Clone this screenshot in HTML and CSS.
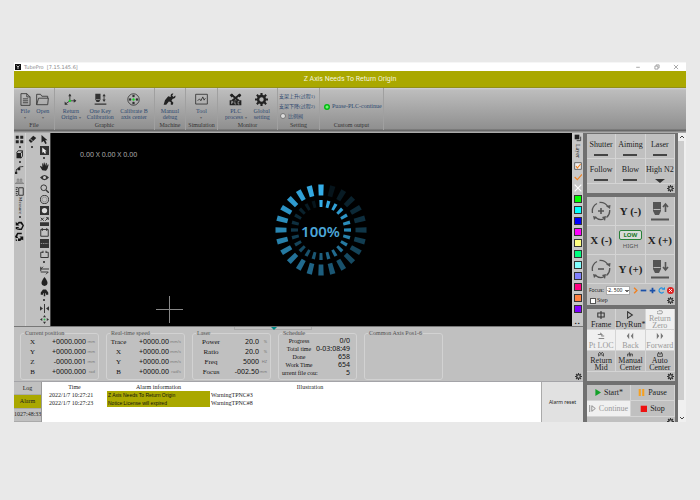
FILE: index.html
```html
<!DOCTYPE html>
<html lang="en">
<head>
<meta charset="utf-8">
<title>TubePro</title>
<link rel="stylesheet" href="styles.css">
</head>
<body>
<svg class="defs" aria-hidden="true">
  <symbol id="gear" viewBox="0 0 16 16"><circle cx="8" cy="8" r="4.2" fill="none" stroke="currentColor" stroke-width="3"/><path d="M8 0v3M8 13v3M0 8h3M13 8h3M2.3 2.3l2.2 2.2M11.5 11.5l2.2 2.2M2.3 13.7l2.2-2.2M11.5 4.5l2.2-2.2" stroke="currentColor" stroke-width="2.6"/></symbol>
  <symbol id="laserhead" viewBox="0 0 20 20"><path d="M3 1h8v9l-2 4H5l-2-4z" fill="currentColor"/><path d="M3.500 8.500h7" stroke="#bbb"/><path d="M1 18.500h18" stroke="currentColor" stroke-width="2"/></symbol>
  <symbol id="rotate" viewBox="0 0 20 20"><path d="M1.500 12A9 9 0 0 1 6 2.500M8.500 1.500A9 9 0 0 1 17 6M18.700 9A9 9 0 0 1 15.500 16.500M12.500 18.200A9 9 0 0 1 4 16" fill="none" stroke="currentColor" stroke-width="1.300"/><path d="M15 5l4 3 .5-4zM15 15l-4 1 3 4zM2 15l1 4 3-3z" fill="currentColor"/></symbol>
</svg>
<div class="app">
  <header class="titlebar">
    <svg class="logo" viewBox="0 0 12 12"><rect width="12" height="12" fill="#111"/><path d="M3 3l3 3 3-3M6 6v4" stroke="#fff" stroke-width="1.500" fill="none"/></svg>
    <span class="title">TubePro&nbsp; [7.15.145.6]</span>
    <div class="wincontrols">
      <button aria-label="Minimize"><svg viewBox="0 0 10 10"><path d="M2 5.500h6"/></svg></button>
      <button aria-label="Restore"><svg viewBox="0 0 10 10"><path d="M1.500 3.500h5v5h-5zM3.500 3V1.500h5v5H7"/></svg></button>
      <button aria-label="Close"><svg viewBox="0 0 10 10"><path d="M1.500 1.500l7 7M8.500 1.500l-7 7"/></svg></button>
    </div>
  </header>
  <div class="banner">Z Axis Needs To Return Origin</div>

  <nav class="ribbon">
    <section class="group g-file">
      <div class="items">
        <button><svg viewBox="0 0 20 20"><path d="M3 1h9l5 5v13H3z" class="ln"/><path d="M12 1v5h5M6 9h8M6 12h8M6 15h8" class="ln"/></svg><span>File<br><i>▾</i></span></button>
        <button><svg viewBox="0 0 20 20"><path d="M1 18V2h6l2 3h9v3M1 18h17l1-10H4L1 18" class="ln"/></svg><span>Open<br><i>▾</i></span></button>
      </div><h2>File</h2>
    </section>
    <section class="group g-graphic">
      <div class="items">
        <button><svg viewBox="0 0 20 20"><path d="M9 2v10M9 12l-7 5M9 12h9" class="ln"/><path d="M6.500 5L9 1l2.500 4zM15 9l4 3-4 3zM1 13v5h5z" fill="#333"/><circle cx="9" cy="12" r="1.800" fill="#1d2"/></svg><span>Return<br>Origin <i>▾</i></span></button>
        <button><svg viewBox="0 0 20 20"><path d="M2 1h8v9l-2 4H4l-2-4zM1 16h18v2H1zM15.500 1l2.500 4h-5zM15.500 14l2.500-4h-5z" fill="#333"/><path d="M15.500 4v7" class="ln"/><path d="M3 10h6" stroke="#aaa"/></svg><span>One Key<br>Calibration</span></button>
        <button><svg viewBox="0 0 20 20"><circle cx="10" cy="10" r="8.800" class="ln"/><circle cx="10" cy="4.700" r="1.900" fill="#333"/><circle cx="10" cy="15.300" r="1.900" fill="#333"/><circle cx="4.700" cy="10" r="1.900" fill="#333"/><circle cx="15.300" cy="10" r="1.900" fill="#333"/><circle cx="10" cy="10" r="1.800" fill="#1d2"/></svg><span>Calibrate B<br>axis center</span></button>
      </div><h2>Graphic</h2>
    </section>
    <section class="group g-machine">
      <div class="items">
        <button><svg viewBox="0 0 20 20"><path d="M1 18l2-7 5-6 4 1c-1-3 1-6 4-5l-2 3 2 2 3-2c1 3-1 5-4 5l-2 3 3 3-1 3h-3v-4l-3-1-4 5z" fill="#222"/></svg><span>Manual<br>debug</span></button>
      </div><h2>Machine</h2>
    </section>
    <section class="group g-sim">
      <div class="items">
        <button><svg viewBox="0 0 20 20"><path d="M1 2h18v15H1z" class="ln"/><path d="M4 12l3-3 2 3 3-6 2 5 2-3" class="ln"/></svg><span>Tool<br><i>▾</i></span></button>
      </div><h2>Simulation</h2>
    </section>
    <section class="group g-monitor">
      <div class="items">
        <button><svg viewBox="0 0 20 20"><path d="M3 2l12 10M17 2L5 12" stroke="#222" stroke-width="3"/><path d="M1 3l4-2 2 3-3 3zM14 4l3-3 2 3-3 3zM1 11h18v8H1z" fill="#222"/><path d="M4 17v-4h2v2H4M9 13v4h2M16 13h-2v4h2" stroke="#bbb" fill="none"/></svg><span>PLC<br>process <i>▾</i></span></button>
        <button><svg class="dark"><use href="#gear"/></svg><span>Global<br>setting</span></button>
      </div><h2>Monitor</h2>
    </section>
    <section class="group g-setting">
      <div class="links">
        <button>支架上升(过程1)</button><button>支架下降(过程2)</button><button><b class="lamp off"></b>比例阀</button>
      </div><h2>Setting</h2>
    </section>
    <section class="group g-custom">
      <div class="links single"><button><b class="lamp"></b>Puase-PLC-continue</button></div><h2>Custom output</h2>
    </section>
  </nav>

  <div class="body">
    <main class="left">
      <div class="work">
        <div class="tools edge">
          <button class="menu" aria-label="Array"><svg viewBox="0 0 12 12"><path d="M1 1h4v4H1zM7 1h4v4H7zM1 7h4v4H1zM7 7h4v4H7z" fill="#222"/></svg></button>
          <button class="menu" aria-label="Solid"><svg viewBox="0 0 12 12"><path d="M2 4h6v7H2z" fill="#222"/><path d="M2 4l2-3h6v7l-2 3M8 4l2-3" class="ln"/></svg></button>
          <button aria-label="Curve"><svg viewBox="0 0 12 12"><path d="M1 11C2 6 5 2 11 2M1 7l6-5" class="ln"/><path d="M0 9h3v3H0zM4 4h3v3H4z" fill="#222"/></svg></button>
          <button aria-label="Tray"><svg viewBox="0 0 12 12"><path d="M1 9h10M3 8V4h2v4M7 8V4h2v4M0 10h12" stroke="#777" fill="none"/></svg></button>
          <button aria-label="Ruler"><svg viewBox="0 0 12 12"><path d="M5 1h6v10H5z" class="ln"/><path d="M1 1h3M1 3.500h2M1 6h3M1 8.500h2M1 11h3" class="ln"/></svg></button>
          <button class="vtext">Measure</button>
          <button class="menu stub" aria-label="More measures"></button>
          <button aria-label="Undo"><svg viewBox="0 0 12 12"><path d="M1 1v5h5L4 4l3-1 3 3-2 4H3v2h6l3-6-3-5H5L3 3zM1 8h4v3H1z" fill="#111"/></svg></button>
          <button aria-label="Redo"><svg viewBox="0 0 12 12"><path d="M11 11V6H6l2 2-3 1-2-3 1-3h5V1H3L0 6l3 6h4l2-2zM1 8h3v4H1z" fill="#111"/></svg></button>
        </div>
        <div class="tools">
          <button class="menu" aria-label="Eraser"><svg viewBox="0 0 12 12"><path d="M1 7l6-6 4 3-6 6H3z" fill="#222"/><path d="M3 5l4 4" stroke="#ddd"/></svg></button>
        </div>
        <div class="tools main">
          <button aria-label="Select"><svg viewBox="0 0 12 12"><path d="M2 0l8 7H7l2 4-2 1-2-4-3 2z" fill="#222"/></svg></button>
          <button class="menu" aria-label="Select part"><svg viewBox="0 0 12 12"><path d="M0 0h12v12H0z" fill="#333"/><path d="M3 2l6 5H7l1 3H6L5 8 3 9z" fill="#eee"/></svg></button>
          <button aria-label="Pan"><svg viewBox="0 0 12 12"><path d="M3 11L0 6l1-1 2 2V2l1-.5L5 5V1l1-.5L7 5l1-4 1 .5V6l1.500-3 1 .5L10 9l-2 2.500z" fill="#222"/></svg></button>
          <button aria-label="View"><svg viewBox="0 0 12 12"><path d="M0 6q6-7 12 0q-6 7-12 0z" fill="#333"/><circle cx="6" cy="6" r="2" fill="#ccc"/></svg></button>
          <button aria-label="Zoom"><svg viewBox="0 0 12 12"><circle cx="5" cy="5" r="3.800" class="ln"/><path d="M8 8l4 4" stroke="#333" stroke-width="1.800"/></svg></button>
          <button aria-label="Circle"><svg viewBox="0 0 12 12"><circle cx="6" cy="6" r="5.400" class="ln"/><circle cx="6" cy="6" r="3.200" fill="none" stroke="#777" stroke-width=".7"/></svg></button>
          <button aria-label="Hole"><svg viewBox="0 0 12 12"><path d="M0 0h12v12H0z" fill="#333"/><circle cx="6" cy="6" r="3.500" fill="#ddd"/></svg></button>
          <button aria-label="Cut"><svg viewBox="0 0 12 12"><path d="M0 7h12v5H0z" fill="#333"/><path d="M1 1l4 4M5 1L1 5M7 5l4-4M8 1h3v3" class="ln"/></svg></button>
          <button aria-label="Frame"><svg viewBox="0 0 12 12"><path d="M1 2h10v9H1z" class="ln"/><path d="M3 0v4M9 0v4" class="ln"/></svg></button>
          <button aria-label="Lines"><svg viewBox="0 0 12 12"><path d="M0 0h12v12H0z" fill="#333"/><path d="M1 6h10" stroke="#aaa" stroke-dasharray="2 1"/></svg></button>
          <button class="menu" aria-label="Weld"><svg viewBox="0 0 12 12"><path d="M4 3H1v7h10V3H8M4 1v3M8 1v3" class="ln"/></svg></button>
          <button aria-label="Reverse"><svg viewBox="0 0 12 12"><path d="M12 4H1l3-3M1 8h10l-3 3M1 1v6" class="ln"/></svg></button>
          <button aria-label="Cool point"><svg viewBox="0 0 12 12"><path d="M6 0q8 10 0 12Q-2 10 6 0z" fill="#222"/></svg></button>
          <button class="menu" aria-label="Group"><svg viewBox="0 0 12 12"><path d="M1 9V6l3-4h4l3 4v3H8V7H7v4H5V7H4v2z" fill="#222"/></svg></button>
          <button aria-label="Mirror"><svg viewBox="0 0 12 12"><path d="M0 3l4 3-4 3zM12 3L8 6l4 3z" fill="#333"/><path d="M6 0v12" class="ln"/></svg></button>
          <button aria-label="Center"><svg viewBox="0 0 12 12"><path d="M6 0l2 3H4zM6 12l2-3H4zM0 6l3-2v4zM12 6L9 4v4z" fill="#333"/><circle cx="6" cy="6" r="1.300" fill="#3b5"/></svg></button>
        </div>
        <div class="canvas">
          <span class="dims">0.00 X 0.00 X 0.00</span>
          <svg class="ring" id="ring" viewBox="-48 -48 96 96"></svg>
          <span class="percent">100%</span>
          <svg class="cross" viewBox="0 0 27 27"><path d="M0 13.500h27M13.500 0v27" stroke="#888"/></svg>
        </div>
        <div class="layers">
          <button aria-label="Layers"><svg viewBox="0 0 12 12"><path d="M1 1h7v7H1z" fill="#222"/><path d="M10 4v6H4" class="ln"/></svg></button>
          <span class="vtext">Layer</span>
          <button aria-label="Show all"><svg viewBox="0 0 12 12"><path d="M1 1h10v10H1z" fill="#eee" stroke="#333"/><path d="M3 6l2 3 5-6" stroke="#f08020" stroke-width="1.600" fill="none"/></svg></button>
          <button aria-label="Process"><svg viewBox="0 0 12 12"><path d="M1 6l4 4 7-8" stroke="#f08020" stroke-width="1.600" fill="none"/></svg></button>
          <button aria-label="No process"><svg viewBox="0 0 12 12"><path d="M1 1l10 10M11 1L1 11" stroke="#fff" stroke-width="1.800"/></svg></button>
          <button class="swatch c1" aria-label="Green"></button><button class="swatch c2" aria-label="Cyan"></button><button class="swatch c3" aria-label="Blue"></button><button class="swatch c4" aria-label="Magenta"></button><button class="swatch c5" aria-label="Yellow"></button><button class="swatch c6" aria-label="Mint"></button><button class="swatch c7" aria-label="Aqua"></button><button class="swatch c8" aria-label="Periwinkle"></button><button class="swatch c9" aria-label="Rose"></button><button class="swatch c10" aria-label="Orange"></button><button class="swatch c11" aria-label="Violet"></button>
          <span class="grip">▪ ▪</span>
        </div>
      </div>

      <div class="status">
        <div class="splitter"></div>
        <div class="boxes">
        <fieldset><legend>Current position</legend><dl>
          <dt>X</dt><dd>+0000.000</dd><dd class="u">mm</dd><dt>Y</dt><dd>+0000.000</dd><dd class="u">mm</dd><dt>Z</dt><dd>-0000.001</dd><dd class="u">mm</dd><dt>B</dt><dd>+0000.000</dd><dd class="u">rad</dd></dl></fieldset>
        <fieldset><legend>Real-time speed</legend><dl class="rates">
          <dt>Trace</dt><dd>+0000.00</dd><dd class="u">mm/s</dd><dt>X</dt><dd>+0000.00</dd><dd class="u">mm/s</dd><dt>Y</dt><dd>+0000.00</dd><dd class="u">mm/s</dd><dt>B</dt><dd>+0000.00</dd><dd class="u">rad/s</dd></dl></fieldset>
        <fieldset><legend>Laser</legend><dl class="wide">
          <dt>Power</dt><dd>20.0</dd><dd class="u">%</dd><dt>Ratio</dt><dd>20.0</dd><dd class="u">%</dd><dt>Freq</dt><dd>5000</dd><dd class="u">HZ</dd><dt>Focus</dt><dd>-002.50</dd><dd class="u">mm</dd></dl></fieldset>
        <fieldset><legend>Schedule</legend><dl class="sched">
          <dt>Progress</dt><dd>0/0</dd><dt>Total time</dt><dd>0-03:08:49</dd><dt>Done</dt><dd>658</dd><dt>Work Time</dt><dd>654</dd><dt>urrent file cou:</dt><dd>5</dd></dl></fieldset>
        <fieldset><legend>Common Axis Pos1-6</legend></fieldset>
        <button class="gearbtn" aria-label="Status settings"><svg><use href="#gear"/></svg></button>
        </div>
      </div>

      <div class="log">
        <div class="tabs"><button>Log</button><button class="on">Alarm</button><button>1027:48:33</button></div>
        <div class="tablewrap"><table>
          <thead><tr><th class="time">Time</th><th class="info">Alarm information</th><th class="ill">Illustration</th><th></th></tr></thead>
          <tbody><tr><td class="when">2022/1/7 10:27:21</td><td class="warn">Z Axis Needs To Return Origin</td><td class="code">WarningTPNC#3</td><td></td></tr>
          <tr><td class="when">2022/1/7 10:27:23</td><td class="warn">Notice:License will expired</td><td class="code">WarningTPNC#8</td><td></td></tr></tbody>
        </table></div>
        <button class="reset">Alarm reset</button>
      </div>
    </main>

    <aside class="side">
      <div class="panels">
        <div class="panel toggles">
          <button>Shutter<i class="bar"></i></button><button>Aiming<i class="bar"></i></button><button>Laser<i class="bar"></i></button>
          <button>Follow<i class="bar"></i></button><button>Blow<i class="bar"></i></button><button>High N2<i class="tri"></i></button>
          <div class="foot"><svg><use href="#gear"/></svg></div>
        </div>
        <div class="panel jog">
          <button aria-label="Rotate plus"><svg viewBox="0 0 20 20"><use href="#rotate"/><path d="M7 10h6M10 7v6" stroke="#555" stroke-width="1.600"/></svg></button><button>Y (-)</button><button aria-label="Head up"><svg viewBox="0 0 20 20"><use href="#laserhead"/><path d="M15.500 11V3M13 6l2.500-3L18 6" class="arrow"/></svg></button>
          <button>X (-)</button><button class="speed"><b>LOW</b><span>HIGH</span></button><button>X (+)</button>
          <button aria-label="Rotate minus"><svg viewBox="0 0 20 20"><use href="#rotate"/><path d="M7 10h6" stroke="#555" stroke-width="1.600"/></svg></button><button>Y (+)</button><button aria-label="Head down"><svg viewBox="0 0 20 20"><use href="#laserhead"/><path d="M15.500 3v8M13 8l2.500 3L18 8" class="arrow"/></svg></button>
          <div class="focus"><label for="focus">Focus:</label><select id="focus"><option>-2. 500</option></select>
            <button aria-label="Go"><svg viewBox="0 0 10 10"><path d="M3 1l4 4-4 4" stroke="#f08020" stroke-width="2" fill="none"/></svg></button>
            <button aria-label="Decrease"><svg viewBox="0 0 10 10"><path d="M1 5h8" stroke="#1a50a8" stroke-width="2.500"/></svg></button>
            <button aria-label="Increase"><svg viewBox="0 0 10 10"><path d="M1 5h8M5 1v8" stroke="#1a50a8" stroke-width="2.500"/></svg></button>
            <button aria-label="Refresh"><svg viewBox="0 0 10 10"><path d="M8 7a3.500 3.500 0 1 1-1-5" stroke="#2090e0" stroke-width="1.600" fill="none"/><path d="M5 4h5V0z" fill="#2090e0"/></svg></button>
            <button aria-label="Stop"><svg viewBox="0 0 10 10"><circle cx="5" cy="5" r="5" fill="#d22"/><path d="M3 3l4 4M7 3L3 7" stroke="#fff" stroke-width="1.400"/></svg></button>
          </div>
          <div class="foot"><input type="checkbox" id="step"><label for="step">Step</label><svg><use href="#gear"/></svg></div>
        </div>
        <div class="panel moves">
          <button><svg viewBox="0 0 10 10"><path d="M1 2.500h8v5H1zM5 0v10" class="ln"/></svg>Frame</button><button><svg viewBox="0 0 10 10"><path d="M2 1l6 4-6 4z" class="ln"/></svg>DryRun*</button><button class="off two" disabled><svg viewBox="0 0 10 10"><path d="M2 8a2 2 0 0 1 0-4q1-2 3-1q4-1 4 2t-2 3z" class="ln"/></svg>Return Zero</button>
          <button class="off" disabled><svg viewBox="0 0 10 10"><path d="M1 3h5L4 1M9 8H2M6 3v2h3" class="ln"/></svg>Pt LOC</button><button class="off" disabled><svg viewBox="0 0 10 10"><path d="M4 1L1 5l3 4zM9 1L6 5l3 4z" fill="#777"/></svg>Back</button><button class="off" disabled><svg viewBox="0 0 10 10"><path d="M1 1l3 4-3 4zM6 1l3 4-3 4z" fill="#777"/></svg>Forward</button>
          <button class="two"><svg viewBox="0 0 10 10"><path d="M1 9V4l2-2 2 4 2-4 2 2v5M1 7h3M6 7h3" class="ln"/></svg>Return Mid</button><button class="two"><svg viewBox="0 0 10 10"><path d="M1 9V5h8v4M4 9V2M6 9V5" class="ln"/></svg>Manual Center</button><button class="two"><svg viewBox="0 0 10 10"><path d="M1 9V5l2-3v3h4V2l2 3v4z" class="ln"/></svg>Auto Center</button>
          <div class="foot"><svg><use href="#gear"/></svg></div>
        </div>
        <div class="panel run">
          <button><svg viewBox="0 0 10 10"><path d="M2 0l8 5-8 5z" fill="#12a028"/></svg>Start*</button><button><svg viewBox="0 0 10 10"><path d="M1 0h3v10H1zM6 0h3v10H6z" fill="#f6a020"/></svg>Pause</button>
          <button class="off" disabled><svg viewBox="0 0 10 10"><path d="M1 0v10M4 1l5 4-5 4z" class="ln"/></svg>Continue</button><button><svg viewBox="0 0 10 10"><path d="M1 1h9v9H1z" fill="#e11"/></svg>Stop</button>
          <div class="foot"><svg><use href="#gear"/></svg></div>
        </div>
      </div>
      <div class="scroll"><svg viewBox="0 0 8 8"><path d="M2 5l2-2 2 2"/></svg><i></i><svg viewBox="0 0 8 8"><path d="M2 3l2 2 2-2"/></svg></div>
    </aside>
  </div>
</div>
<script src="ring.js"></script>
</body>
</html>
```
FILE: styles.css
```css
* { box-sizing: border-box; }
body { margin: 0; background: #e9e9e9; font: 6px/7px "Liberation Serif", "Noto Sans CJK SC", serif; color: #222; }
button { font: inherit; color: inherit; background: none; border: 0; padding: 0; margin: 0; }
i { font-style: normal; }
svg { display: block; }
.defs { width: 0; height: 0; position: absolute; }
.ln { fill: none; stroke: #333; stroke-width: 1.3; }
.app { margin: 62px 14px 0; }

.titlebar { height: 9px; background: #fff; display: flex; align-items: center; padding: 0 7px 0 1px; gap: 3px; font: 5px/8px "DejaVu Sans", sans-serif; color: #888; border-top: 1px solid #f6f6f6; }
.logo { width: 6px; height: 6px; }
.wincontrols { margin-left: auto; display: flex; gap: 13px; }
.wincontrols svg { width: 6px; height: 6px; fill: none; stroke: #888; stroke-width: 1.2; }
.banner { height: 17px; background: #aaa800; border-bottom: 1px solid #928f18; color: #f4f4dc; font: 7px/17px Roboto, sans-serif; text-align: center; }

.ribbon { height: 45px; display: flex; background: linear-gradient(#d0d0d8 0, #bdbdbd 2px, #8f8f8f 41px, #666 42px, #6a6a6a 43px, #aaa 44px); }
.group { height: 42px; border-right: 1px solid #a0a0a0; display: flex; flex-direction: column; }
.g-file { width: 41px; } .g-graphic { width: 100px; } .g-machine { width: 31px; } .g-sim { width: 32px; } .g-monitor { width: 60px; } .g-setting { width: 42px; } .g-custom { width: 64px; }
.group h2 { margin: 0; font: 6px/8px "Liberation Serif", serif; text-align: center; color: #333; }
.items { display: flex; justify-content: space-evenly; height: 33px; padding-top: 5px; color: #2f4a70; }
.items button { display: flex; flex-direction: column; align-items: center; gap: 2px; line-height: 6px; }
.items svg { width: 13px; height: 13px; flex: none; }
.items svg.dark { color: #222; }
.items i { font-size: 4px; color: #666; }
.links { height: 33px; padding: 3px 0 0 1px; display: flex; flex-direction: column; color: #2f4a70; font-size: 5px; }
.links button { height: 10px; display: flex; align-items: center; white-space: nowrap; }
.links.single { justify-content: center; padding: 4px 0 0 4px; font-size: 6px; }
.lamp { width: 6px; height: 6px; border-radius: 50%; background: radial-gradient(#8f8 10%, #0b1 50%); margin-right: 2px; }
.lamp.off { background: #ddd; border: 1px solid #777; margin-left: 1px; }

.body { display: flex; height: 289px; }
.left { flex: 1; min-width: 0; display: flex; flex-direction: column; background: #c0c0c0; }
.work { height: 194px; display: flex; border-bottom: 1px solid #777; }
.tools { width: 12px; padding-top: 1px; display: flex; flex-direction: column; align-items: center; }
.tools.edge { border-right: 1px solid #d2d2d2; }
.tools button { width: 11px; height: 11px; display: flex; flex-direction: column; align-items: center; flex: none; }
.tools svg { width: 9px; height: 9px; flex: none; margin-top: 1px; }
.tools .menu { height: 16px; }
.tools .menu::after { content: ""; width: 2px; height: 2px; background: #222; border-radius: 50%; margin-top: 2px; }
.tools.edge .menu { height: 15px; }
.tools .menu.stub { height: 6px; }
.tools .vtext, .layers .vtext { writing-mode: vertical-rl; height: auto; width: 8px; line-height: 8px; display: block; }
.tools .vtext { font-size: 5px; }
.canvas { flex: 1; background: #000; position: relative; border-left: 1px solid #444; }
.dims { position: absolute; left: 29px; top: 17px; font: 7px/10px "Noto Sans", sans-serif; color: #aaa; }
.ring { position: absolute; left: calc(50% + 9px); top: 50%; width: 96px; height: 96px; transform: translate(-50%, -50%); }
.percent { position: absolute; left: calc(50% + 9px); top: calc(50% + 1px); transform: translate(-50%, -50%); font: 600 15px/20px "Noto Sans", sans-serif; color: #4ba6d8; }
.cross { position: absolute; left: 105px; bottom: 3px; width: 27px; height: 27px; }
.layers { width: 11px; display: flex; flex-direction: column; align-items: center; background: #c8c8c8; }
.layers button { width: 8px; height: 8px; margin: 1px 0 2px; flex: none; }
.layers .vtext { height: 17px; }
.layers svg { width: 8px; height: 8px; }
.layers .swatch { border: 1px solid #333; }
.c1 { background: #0f0; } .c2 { background: #0ff; } .c3 { background: #00f; } .c4 { background: #f0f; } .c5 { background: #ffff80; } .c6 { background: #00ff80; } .c7 { background: #80ffff; } .c8 { background: #8080ff; } .c9 { background: #ff0080; } .c10 { background: #ff8040; } .c11 { background: #8000ff; }
.grip { font-size: 5px; line-height: 5px; margin-top: auto; }

.status { height: 55px; border-bottom: 1px solid #a4a4a8; }
.splitter { width: 78px; height: 3px; margin-left: 220px; border: 1px solid #aaa; border-top: 0; position: relative; }
.splitter::after { content: ""; position: absolute; left: 36px; top: 0; border: 3px solid transparent; border-top: 3px solid #088; border-bottom: 0; }
.boxes { display: flex; gap: 7px; padding-left: 6px; height: 50px; }
fieldset { flex: 0 1 79px; min-width: 0; margin: 0; padding: 0 3px; border: 1px solid #d2d2d2; border-radius: 3px; overflow: hidden; }
legend { padding: 0 1px; color: #555; line-height: 7px; white-space: nowrap; }
dl { margin: 0; display: grid; grid-template-columns: 17px 1fr 9px; line-height: 10px; font-size: 7px; align-items: center; }
dl.rates { grid-template-columns: 17px 1fr 12px; }
dl.wide { grid-template-columns: 30px 1fr 8px; }
dt { text-align: center; white-space: nowrap; color: #111; }
dd { margin: 0; text-align: right; font: 7px/10px "Noto Sans", sans-serif; color: #111; white-space: nowrap; }
dd.u { font-size: 4px; color: #777; }
dl.sched { grid-template-columns: 34px 1fr; padding-right: 7px; line-height: 8px; font-size: 6px; }
.sched dd { line-height: 8px; }
.gearbtn { margin: auto 1px 0 auto; color: #333; }
.gearbtn svg, .foot svg { width: 7px; height: 7px; color: #333; }

.log { flex: 1; display: flex; min-height: 0; }
.tabs { width: 28px; display: flex; flex-direction: column; overflow: hidden; border-right: 1px solid #999; }
.tabs button { flex: 1; border-bottom: 1px solid #aaa; white-space: nowrap; }
.tabs .on { background: #aaa800; }
.tablewrap { flex: 1; background: #fff; border-right: 1px solid #aaa; padding-top: 1px; }
table { width: 100%; border-collapse: collapse; table-layout: fixed; }
th, td { padding: 0 1px; height: 8px; line-height: 8px; font-weight: 400; text-align: left; white-space: nowrap; }
th { text-align: center; }
.time { width: 65px; } .info { width: 103px; } .ill { width: 200px; }
td.when { padding-left: 7px; }
td.warn { background: #aaa800; font: 5px/8px "Liberation Sans", sans-serif; color: #111; }
.reset { width: 41px; background: #e1e1e1; font: 5px/8px "Noto Sans", sans-serif; }

.side { width: 103px; display: flex; }
.panels { flex: 1; background: #707070; padding: 1px 3px 0 4px; display: flex; flex-direction: column; gap: 4px; overflow: hidden; }
.panel { display: grid; grid-template-columns: repeat(3, 1fr); background: #c0c0c0; flex: none; font-size: 8px; color: #222; }
.panel > button { border-right: 1px solid #d4d4d4; border-bottom: 1px solid #d4d4d4; min-width: 0; }
.foot { grid-column: 1 / -1; height: 9px; display: flex; align-items: center; font-size: 6px; padding: 0 1px; }
.foot svg { margin-left: auto; }
.toggles > button { height: 25px; display: flex; flex-direction: column; align-items: center; padding-top: 7px; gap: 6px; white-space: nowrap; }
.bar { width: 14px; height: 2px; background: #444; }
.tri { border: 5px solid transparent; border-top: 4px solid #333; border-bottom: 0; }
.jog > button { height: 29px; font-size: 11px; font-weight: 700; }
.jog > button svg { width: 20px; height: 20px; margin: auto; color: #555; }
.arrow { fill: none; stroke: #555; stroke-width: 1.600; }
.speed b { display: block; width: 23px; margin: 0 auto 2px; border: 1px solid #288038; border-radius: 2px; background: #d8dcd8; color: #187828; font: 700 6px/8px "Noto Sans", sans-serif; }
.speed span { display: block; font: 6px/8px "Noto Sans", sans-serif; color: #555; }
.focus { grid-column: 1 / -1; height: 12px; display: flex; align-items: center; justify-content: space-between; padding: 0 1px 0 2px; font: 5px/8px "Noto Sans", sans-serif; }
.focus svg { width: 7px; height: 7px; }
.focus select { appearance: none; width: 24px; height: 9px; font: 5px/7px "Noto Sans", sans-serif; color: #111; border: 1px solid #aaa; border-radius: 0; background: linear-gradient(45deg, transparent 50%, #666 50%) 18px 3px / 2px 2px no-repeat, linear-gradient(-45deg, transparent 50%, #666 50%) 20px 3px / 2px 2px no-repeat, #fff; padding: 0; }
.foot input { width: 6px; height: 6px; margin: 0 1px 0 2px; appearance: none; background: #fff; border: 1px solid #555; }
.moves > button { height: 21px; line-height: 7px; display: flex; flex-direction: column; align-items: center; gap: 2px; padding: 2px 0 0; }
.moves svg { width: 8px; height: 8px; flex: none; }
.moves .foot svg { width: 7px; height: 7px; }
.moves > .two { gap: 0; padding: 0; }
.moves .two svg { width: 6px; height: 6px; }
.panel .off { background: #f0f0f0; color: #999; }
.off .ln { stroke: #888; }
.run { grid-template-columns: 1fr 1fr; }
.run > button { height: 16px; display: flex; align-items: center; justify-content: center; gap: 3px; }
.run button svg { width: 7px; height: 7px; }
.scroll { width: 8px; background: #f0f0f0; display: flex; flex-direction: column; }
.scroll i { flex: 1; background: #cdcdcd; margin: 0 2px 14px 0; }
.scroll svg { width: 8px; height: 8px; fill: none; stroke: #444; }
```
FILE: ring.js
```js
// Two rings of 24 bars: the outer fades clockwise to full, the inner fades the other way.
const ring = document.getElementById("ring");
const add = (d, angle, level, base) => {
  const p = document.createElementNS("http://www.w3.org/2000/svg", "path");
  p.setAttribute("d", d);
  p.setAttribute("fill", "#35aee8");
  p.setAttribute("opacity", base + (1 - base) * level);
  p.setAttribute("transform", "rotate(" + angle + ")");
  ring.append(p);
};
for (let i = 0; i < 24; i++) {
  add("M-2.700-45.500h5.400l-.4 11h-4.600z", i * 15, i === 0 ? 1 : i / 24, 0.08);
  add("M-1.700-30h3.400l-.3 7h-2.800z", i * 15, 1 - i / 24, 0.08);
}
```
